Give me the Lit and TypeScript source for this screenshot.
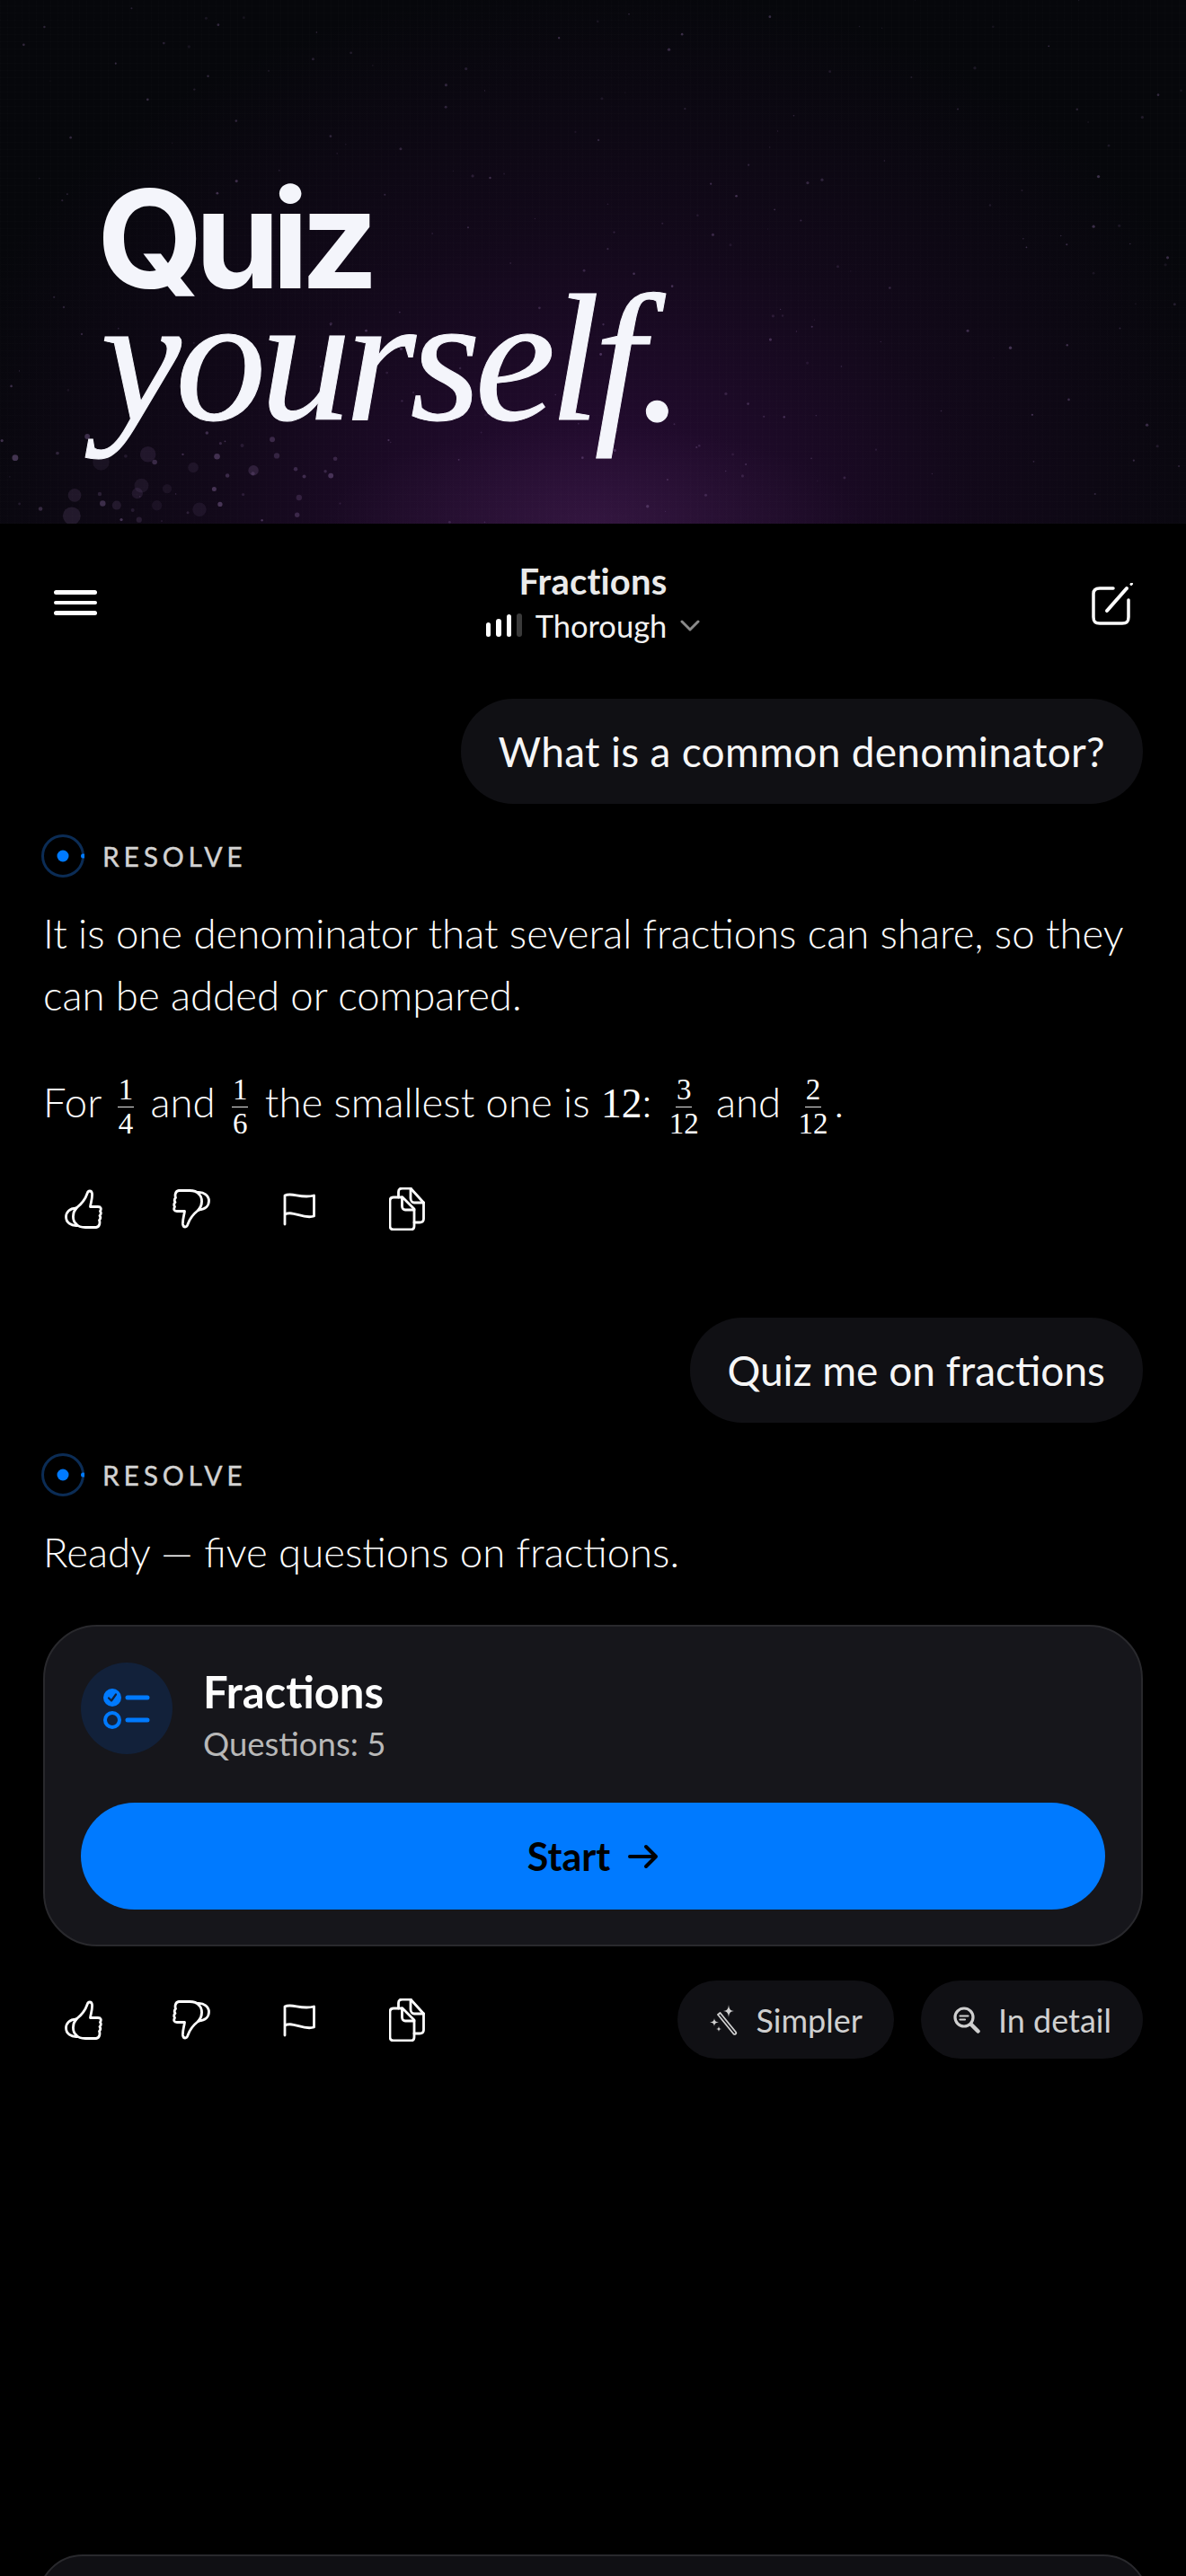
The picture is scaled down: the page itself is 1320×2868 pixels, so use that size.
import { LitElement, html, css, svg } from "lit";
import { customElement } from "lit/decorators.js";

function rng(seed: number) {
  return () => {
    seed |= 0; seed = (seed + 0x6d2b79f5) | 0;
    let t = Math.imul(seed ^ (seed >>> 15), 1 | seed);
    t = (t + Math.imul(t ^ (t >>> 7), 61 | t)) ^ t;
    return ((t ^ (t >>> 14)) >>> 0) / 4294967296;
  };
}
const r = rng(42);
const dots: { x: number; y: number; s: number; o: number }[] = [];
for (let i = 0; i < 220; i++) dots.push({ x: r() * 1320, y: r() * 583, s: 0.6 + r() * 1.1, o: 0.1 + r() * 0.28 });
for (let i = 0; i < 26; i++) dots.push({ x: r() * 380, y: 480 + r() * 103, s: 1.5 + r() * 2, o: 0.15 + r() * 0.25 });
for (let i = 0; i < 12; i++) dots.push({ x: 10 + r() * 310, y: 500 + r() * 83, s: 4 + r() * 6, o: 0.08 + r() * 0.12 });

const thumb = svg`<path d="M13 21C18 17 23 11 25 5C26 1 30 1 30.500 5C31 10 29 15 28.500 19.500L37 19.500C40.500 19.500 41 22 39.500 24.500C40.500 26 40.500 28 39 29.500C40 31 40 33 38.500 34.500C39.500 37 39 42 35 42.500L23 42.500C19 42.500 15 41.500 13 39"/><path d="M13 21C5 21.500 1.500 26 1.500 31C1.500 37 7 41 14 40.500"/><path d="M13 21C8.500 26 8 34.500 13 39"/>`;

@customElement("app-root")
export class AppRoot extends LitElement {
  static styles = css`
    :host {
      display: flex; flex-direction: column; height: 2868px; overflow: hidden;
      background: #000; color: #f4f4f4;
      font-family: Lato, "Liberation Sans", sans-serif;
    }
    .hero {
      position: relative; height: 583px; flex: none; overflow: hidden; box-sizing: border-box;
      padding: 193px 0 0 108px;
      background:
        radial-gradient(ellipse 300px 110px at 50% 100%, rgba(70,40,80,.35), rgba(50,20,60,0) 100%),
        radial-gradient(ellipse 760px 600px at 50% 100%, rgba(42,12,56,.95), rgba(28,10,38,.55) 55%, rgba(10,8,14,0) 100%),
        #06070b;
    }
    .grid {
      position: absolute; inset: 0;
      background:
        repeating-linear-gradient(90deg, rgba(255,255,255,.007) 0 1px, transparent 1px 8px),
        repeating-linear-gradient(0deg, rgba(255,255,255,.007) 0 1px, transparent 1px 8px);
    }
    .stars { position: absolute; inset: 0; }
    .quiz {
      position: relative; font-family: Inter, sans-serif; font-weight: 700; font-size: 152px;
      line-height: 146px; letter-spacing: -0.06em; color: #f4f5fb;
    }
    .your {
      position: relative; font-family: "Liberation Serif", serif; font-style: italic; font-size: 202px;
      line-height: 170px; letter-spacing: -0.032em; color: #f4f5fb; margin-left: 4px; margin-top: -25px;
      -webkit-text-stroke: 1px #f4f5fb;
    }
    nav {
      flex: none; height: 195px; box-sizing: border-box; padding: 40px 60px 0 60px;
      display: grid; grid-template-columns: 48px 1fr 48px; align-items: start;
    }
    .burger { display: flex; flex-direction: column; gap: 7px; margin-top: 34px; }
    .burger i { display: block; height: 4.500px; border-radius: 3px; background: #fff; }
    .ntitle { text-align: center; }
    .t1 { font-size: 40px; line-height: 48px; font-weight: 700; letter-spacing: .2px; color: #eaeaea; }
    .t2 { display: flex; justify-content: center; align-items: center; gap: 15px; height: 50px; font-size: 34.500px; color: #f2f2f2; }
    .bars { display: flex; align-items: flex-end; gap: 6px; height: 26px; }
    .bars i { display: block; width: 5.500px; border-radius: 3px; background: #fff; }
    .bars .b1 { height: 16px; } .bars .b2 { height: 20px; } .bars .b3 { height: 25px; }
    .bars .b4 { height: 26px; background: #3a3a3a; }
    .compose { margin-top: 26px; margin-left: 2px; }
    main { padding: 0 48px; display: flex; flex-direction: column; }
    .bubble {
      align-self: flex-end; height: 117px; box-sizing: border-box; padding: 0 42px;
      display: flex; align-items: center; background: #101014; border-radius: 58px;
      font-size: 46px; letter-spacing: .3px; color: #f6f6f6;
    }
    .who { display: flex; align-items: center; gap: 20px; margin: 34px 0 0 -2px; height: 48px; }
    .who span { font-size: 30px; font-weight: 400; letter-spacing: .16em; color: #d2d2d2; -webkit-text-stroke: .4px #d2d2d2; }
    .p { font-size: 45.500px; line-height: 69px; font-weight: 300; color: #fff; }
    .p1 { margin-top: 27px; }
    .p2 { margin-top: 50px; }
    .serif { font-family: "Liberation Serif", serif; font-weight: 400; }
    .frac {
      display: inline-flex; flex-direction: column; align-items: center; vertical-align: middle;
      font-family: "Liberation Serif", serif; font-weight: 400; font-size: 33px; line-height: 29px; margin: -6px 6px;
    }
    .frac b { font-weight: 400; display: block; padding: 0 1px 4px; }
    .frac b:first-child { border-bottom: 1.500px solid #e8e8e8; }
    .frac b:last-child { padding: 4px 1px 0; }
    .row { display: flex; align-items: center; justify-content: space-between; }
    .acts { display: flex; margin-left: -15px; align-items: center; }
    .acts div { width: 120px; display: flex; justify-content: center; }
    .acts svg { fill: none; stroke: #fff; stroke-width: 2.800; stroke-linecap: round; stroke-linejoin: round; }
    .a1 { margin-top: 59px; height: 48px; }
    .b2nd { margin-top: 97px; letter-spacing: 0; }
    .card {
      margin-top: 47px; box-sizing: border-box; height: 358px; padding: 40px;
      background: #16161b; border: 2px solid #29292d; border-radius: 60px;
    }
    .chead { display: flex; gap: 34px; height: 102px; }
    .ico { width: 102px; height: 102px; flex: none; border-radius: 50%; background: #12213a; }
    .ctitle { font-size: 49px; line-height: 58px; font-weight: 700; color: #fdfdfd; margin-top: 3px; }
    .csub { font-size: 36.500px; line-height: 50px; color: #b8b8b8; margin-top: 4px; }
    .start {
      margin-top: 54px; height: 119px; border-radius: 60px; background: #007aff; color: #000;
      display: flex; align-items: center; justify-content: center; gap: 20px;
      font-size: 43px; font-weight: 700;
    }
    .a2 { margin-top: 38px; height: 87px; }
    .chips { display: flex; gap: 30px; }
    .chip {
      height: 87px; box-sizing: border-box; display: flex; align-items: center; gap: 20px;
      border-radius: 44px; background: #101014; color: #cfcfcf; font-size: 36px; padding: 0 35px 0 36px;
    }
    .composer {
      flex: none; margin: auto 42px -76px; height: 100px; box-sizing: border-box;
      background: #101014; border: 2px solid #29292d; border-radius: 60px;
    }
  `;

  private logo() {
    return html`<svg width="48" height="48" viewBox="0 0 48 48">
      <circle cx="24" cy="24" r="22.500" fill="none" stroke="#0b2c55" stroke-width="3"/>
      <circle cx="24" cy="24" r="6.500" fill="#007aff"/>
      <circle cx="46.500" cy="24" r="2.500" fill="#007aff"/>
    </svg>`;
  }

  private actions() {
    return html`<div class="acts">
      <div><svg width="42" height="44" viewBox="0 0 42 44">${thumb}</svg></div>
      <div><svg width="42" height="44" viewBox="0 0 42 44"><g transform="rotate(180 21 22)">${thumb}</g></svg></div>
      <div><svg width="36" height="38" viewBox="0 0 36 38"><path d="M2 36V4C10 0 20 8 34.500 4V27C22 31 12 20 2 25"/></svg></div>
      <div><svg width="40" height="48" viewBox="0 0 40 48">
        <path d="M5 11H15L28 24V43C28 46 26 47 24 47H5C2 47 1 45 1 43V15C1 12 3 11 5 11Z"/>
        <path d="M14.500 11V21C14.500 23 16 25 18 25H28"/>
        <path d="M10.500 11V5C10.500 2 12.500 1 15 1H24L38.500 17V35C38.500 38 36.500 39 34 39H28"/>
        <path d="M24 1V12C24 15 26 17 28 17H38.500"/>
      </svg></div>
    </div>`;
  }

  private frac(a: string, b: string) {
    return html`<span class="frac"><b>${a}</b><b>${b}</b></span>`;
  }

  render() {
    return html`
      <section class="hero">
        <div class="grid"></div>
        <svg class="stars" width="1320" height="583" viewBox="0 0 1320 583">
          ${dots.map((d) => svg`<circle cx=${d.x} cy=${d.y} r=${d.s} fill="#9a78b4" opacity=${d.o}/>`)}
        </svg>
        <div class="quiz">Quiz</div>
        <div class="your">yourself.</div>
      </section>
      <nav>
        <div class="burger"><i></i><i></i><i></i></div>
        <div class="ntitle">
          <div class="t1">Fractions</div>
          <div class="t2">
            <span class="bars"><i class="b1"></i><i class="b2"></i><i class="b3"></i><i class="b4"></i></span>
            <span>Thorough</span>
            <svg width="22" height="13" viewBox="0 0 22 13"><path d="M2 2L11 11L20 2" fill="none" stroke="#8a8a8a" stroke-width="3" stroke-linecap="round" stroke-linejoin="round"/></svg>
          </div>
        </div>
        <svg class="compose" width="48" height="48" viewBox="0 0 48 48" fill="none" stroke="#fff" stroke-width="3.500" stroke-linecap="round" stroke-linejoin="round">
          <path d="M25 6H10C5 6 3 8 3 12V38C3 43 5 45 10 45H35C40 45 42 43 42 38V19"/>
          <path d="M18 31L40 6" stroke-width="4"/><path d="M45 1.500L45.500 1" stroke-width="3"/>
        </svg>
      </nav>
      <main>
        <div class="bubble">What is a common denominator?</div>
        <div class="who">${this.logo()}<span>RESOLVE</span></div>
        <div class="p p1">It is one denominator that several fractions can share, so they can be added or compared.</div>
        <div class="p p2">For ${this.frac("1", "4")} and ${this.frac("1", "6")} the smallest one is <span class="serif">12</span>: ${this.frac("3", "12")} and ${this.frac("2", "12")}.</div>
        <div class="row a1">${this.actions()}</div>
        <div class="bubble b2nd">Quiz me on fractions</div>
        <div class="who">${this.logo()}<span>RESOLVE</span></div>
        <div class="p p1">Ready — five questions on fractions.</div>
        <div class="card">
          <div class="chead">
            <div class="ico"><svg width="102" height="102" viewBox="0 0 102 102">
              <circle cx="35" cy="39" r="10" fill="#007aff"/>
              <path d="M31 39.500L34 42.500L39 35.500" fill="none" stroke="#12213a" stroke-width="2.200" stroke-linecap="round" stroke-linejoin="round"/>
              <circle cx="35" cy="64" r="8" fill="none" stroke="#007aff" stroke-width="4"/>
              <path d="M52 39H74M52 64H74" stroke="#007aff" stroke-width="5" stroke-linecap="round"/>
            </svg></div>
            <div><div class="ctitle">Fractions</div><div class="csub">Questions: 5</div></div>
          </div>
          <div class="start"><span>Start</span>
            <svg width="34" height="28" viewBox="0 0 34 28" fill="none" stroke="#000" stroke-width="4" stroke-linecap="round" stroke-linejoin="round"><path d="M2 14H31M20 3L31 14L20 25"/></svg>
          </div>
        </div>
        <div class="row a2">
          ${this.actions()}
          <div class="chips">
            <div class="chip">
              <svg width="32" height="34" viewBox="0 0 32 34" fill="none" stroke="#cfcfcf" stroke-width="1.800" stroke-linecap="round" stroke-linejoin="round">
                <path d="M9 11L11.500 9L29 30.500C30 32 28 33.500 26.500 32.500Z"/>
                <path d="M21 0C21.500 5 23 6.500 27 7C23 7.500 21.500 9 21 14C20.500 9 19 7.500 15 7C19 6.500 20.500 5 21 0Z" fill="#cfcfcf" stroke="none"/>
                <path d="M5 15C5.400 18 6.500 19 10 19.500C6.500 20 5.400 21 5 24C4.600 21 3.500 20 0 19.500C3.500 19 4.600 18 5 15Z" fill="#cfcfcf" stroke="none"/>
                <path d="M10 24C10.300 26 11 26.700 13 27C11 27.300 10.300 28 10 30C9.700 28 9 27.300 7 27C9 26.700 9.700 26 10 24Z" fill="#cfcfcf" stroke="none"/>
              </svg>
              <span>Simpler</span>
            </div>
            <div class="chip">
              <svg width="30" height="30" viewBox="0 0 30 30" fill="none" stroke="#cfcfcf" stroke-linecap="round">
                <circle cx="12" cy="12" r="10" stroke-width="3.200"/>
                <path d="M20 20L27.500 27.500" stroke-width="4.500"/>
                <path d="M7.500 10.500H16.500M7.500 14.500H13" stroke-width="2.200"/>
              </svg>
              <span>In detail</span>
            </div>
          </div>
        </div>
      </main>
      <div class="composer"></div>
    `;
  }
}
